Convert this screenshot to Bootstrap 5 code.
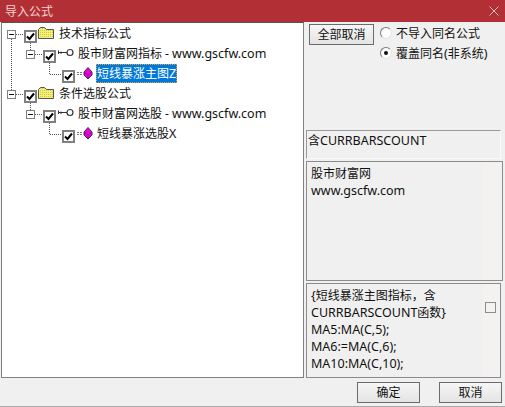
<!DOCTYPE html>
<html lang="zh"><head><meta charset="utf-8">
<link href="https://cdn.jsdelivr.net/npm/bootstrap@5.3.0/dist/css/bootstrap.min.css" rel="stylesheet">
<style>
html,body{margin:0;height:407px;width:505px;overflow:hidden;background:#f0f0f0}
body{font:12px/17px "Noto Sans","Noto Sans CJK SC",sans-serif;color:#111}
.lat{font-size:12.5px}
.dlg{width:505px;height:407px}
.ttl{height:22px;background:#b23035;color:#efd3d4;padding:0 6px 0 5px}
.mainrow{height:356px}
.treebox{width:303px;margin-left:1px;background:#fff;border:1px solid #808080;border-top-color:#555;padding-top:1px;position:relative}
.treelines{position:absolute;left:-2px;top:-23px}
.trow{height:20px;white-space:nowrap}
.lv0{padding-left:5px}
.lv1{padding-left:24px}
.lv2{padding-left:60px}
.expd{width:9px;height:9px;border:1px solid #808080;background:#fff;margin:6px 8px 0 0;flex:none;display:flex;align-items:center;justify-content:center}
.expd i{width:5px;height:1px;background:#111;display:block}
.cb{width:13px;height:13px;border:2px solid #808080;background:#fff;flex:none;margin-top:6px;display:flex;align-items:center;justify-content:center}
.ic{flex:none}
.fold{margin-left:1px}
.lab{padding:1px 1px 0;height:19px}
.sel{background:#0078d7;color:#fff;outline:1px dotted #e8a33c;outline-offset:-1px;margin-left:3px}
.plainleaf{margin-left:3px}
.side{width:200px;padding-left:2px}
.toprow{height:108px;padding:2px 0 0 3px}
.wbtn{border:1px solid #6b6b6b;background:linear-gradient(#f6f6f6,#e4e4e4);color:#111;font-size:12px;line-height:17px;padding:0;border-radius:0}
.allbtn{width:65px;height:21px}
.radrow{height:20px}
.radcol{margin:-1px 0 0 6px}
.radio{width:12px;height:12px;border-radius:50%;background:#fff;border:1px solid #e4e4e4;border-top-color:#777;border-left-color:#777;flex:none;display:flex;align-items:center;justify-content:center;margin-right:4px}
.radio i{width:4px;height:4px;border-radius:50%;background:#111;display:block}
.infobox{height:29px;width:195px;border:1px solid #fafafa;border-top-color:#999;border-left-color:#999;padding:1px 0 0 1px}
.panelbox{border:1px solid #8c8c8c;background:#f0f0f0}
.descbox{height:120px;width:197px;margin-top:2px;box-shadow:inset -1px 0 0 #fff}
.codebox{height:95px;width:195px;margin-top:2px}
.ptext{padding:3px 0 0 4px;flex:1 1 auto;white-space:nowrap}
.pstrip{width:19px;background:#f3f2f0;flex:none}
.codebox .pstrip{width:17px}
.cktiny{width:11px;height:11px;border:1px solid #8c8c8c;display:block;margin:18px 0 0 2px}
.foot{height:29px;padding:4px 3px 0 0;border-bottom:1px solid #aaa;gap:19px}
.footbtn{width:63px;height:21px}
</style></head><body>
<div class="dlg d-flex flex-column">
  <div class="ttl d-flex align-items-center justify-content-between"><span>导入公式</span>
    <svg width="10" height="10" viewBox="0 0 10 10"><path d="M0.500 0.500l9 9M9.500 0.500l-9 9" stroke="#e3bcbe" fill="none"/></svg></div>
  <div class="mainrow d-flex">
    <div class="treebox">
      <svg class="treelines" width="110" height="160"><g stroke="#555" stroke-dasharray="1 1" fill="none"><path d="M11.500 39V90M16 34.500H24M30.500 43V50M35 54.500H43M49.500 63V74.500H62M16 94.500H24M30.500 103V110M35 114.500H43M49.500 123V134.500H62"/></g></svg>

      <div class="trow lv0 d-flex"><span class="expd"><i></i></span><span class="cb"><svg width="9" height="9" viewBox="0 0 9 9"><path d="M1 4.500l2.500 2.500 4.500-5.500" stroke="#000" stroke-width="2" fill="none"/></svg></span>
        <svg class="ic fold" width="16" height="16" viewBox="0 0 16 16"><defs><pattern id="dith" width="2" height="2" patternUnits="userSpaceOnUse"><rect width="2" height="2" fill="#f6f06a"/><rect width="1" height="1" fill="#c8c46e"/></pattern></defs><path d="M.5 14.500V5.500l2-2h4l2 2h7v9z" fill="url(#dith)" stroke="#555"/></svg><span class="lab ms-1">技术指标公式</span></div>

      <div class="trow lv1 d-flex"><span class="expd"><i></i></span><span class="cb"><svg width="9" height="9" viewBox="0 0 9 9"><path d="M1 4.500l2.500 2.500 4.500-5.500" stroke="#000" stroke-width="2" fill="none"/></svg></span>
        <svg class="ic" width="18" height="18" viewBox="0 0 18 18"><path d="M2.500 6.500V10M5 7.500V10M2 8.500H11" stroke="#333" fill="none"/><circle cx="14" cy="8.500" r="3" fill="#fff" stroke="#333" stroke-width="1.200"/></svg><span class="lab ps-1">股市财富网指标 - <span class="lat">www.gscfw.com</span></span></div>

      <div class="trow lv2 d-flex"><span class="cb"><svg width="9" height="9" viewBox="0 0 9 9"><path d="M1 4.500l2.500 2.500 4.500-5.500" stroke="#000" stroke-width="2" fill="none"/></svg></span>
        <svg class="ic" width="18" height="18" viewBox="0 0 18 18"><path d="M2 8.500H8M2 10.500H8" stroke="#777" stroke-dasharray="2 1" fill="none"/><path d="M13 3.500L17 8v3l-4 4-4-4V8z" fill="#f000e0" stroke="#333"/><path d="M9 8l4 3 4-3M13 11v4" fill="none" stroke="#a000a0"/></svg><span class="lab sel">短线暴涨主图<span class="lat">Z</span></span></div>

      <div class="trow lv0 d-flex"><span class="expd"><i></i></span><span class="cb"><svg width="9" height="9" viewBox="0 0 9 9"><path d="M1 4.500l2.500 2.500 4.500-5.500" stroke="#000" stroke-width="2" fill="none"/></svg></span>
        <svg class="ic fold" width="16" height="16" viewBox="0 0 16 16"><path d="M.5 14.500V5.500l2-2h4l2 2h7v9z" fill="url(#dith)" stroke="#555"/></svg><span class="lab ms-1">条件选股公式</span></div>

      <div class="trow lv1 d-flex"><span class="expd"><i></i></span><span class="cb"><svg width="9" height="9" viewBox="0 0 9 9"><path d="M1 4.500l2.500 2.500 4.500-5.500" stroke="#000" stroke-width="2" fill="none"/></svg></span>
        <svg class="ic" width="18" height="18" viewBox="0 0 18 18"><path d="M2.500 6.500V10M5 7.500V10M2 8.500H11" stroke="#333" fill="none"/><circle cx="14" cy="8.500" r="3" fill="#fff" stroke="#333" stroke-width="1.200"/></svg><span class="lab ps-1">股市财富网选股 - <span class="lat">www.gscfw.com</span></span></div>

      <div class="trow lv2 d-flex"><span class="cb"><svg width="9" height="9" viewBox="0 0 9 9"><path d="M1 4.500l2.500 2.500 4.500-5.500" stroke="#000" stroke-width="2" fill="none"/></svg></span>
        <svg class="ic" width="18" height="18" viewBox="0 0 18 18"><path d="M2 8.500H8M2 10.500H8" stroke="#777" stroke-dasharray="2 1" fill="none"/><path d="M13 3.500L17 8v3l-4 4-4-4V8z" fill="#f000e0" stroke="#333"/><path d="M9 8l4 3 4-3M13 11v4" fill="none" stroke="#a000a0"/></svg><span class="lab plainleaf">短线暴涨选股<span class="lat">X</span></span></div>
    </div>
    <div class="side d-flex flex-column">
      <div class="toprow d-flex align-items-start">
        <button type="button" class="btn wbtn allbtn">全部取消</button>
        <div class="radcol">
          <div class="radrow d-flex align-items-center"><span class="radio"></span>不导入同名公式</div>
          <div class="radrow d-flex align-items-center"><span class="radio"><i></i></span>覆盖同名<span class="lat">(</span>非系统<span class="lat">)</span></div>
        </div>
      </div>
      <div class="infobox">含<span class="lat">CURRBARSCOUNT</span></div>
      <div class="panelbox descbox d-flex"><div class="ptext">股市财富网<br><span class="lat">www.gscfw.com</span></div><div class="pstrip"></div></div>
      <div class="panelbox codebox d-flex"><div class="ptext"><span class="lat">{</span>短线暴涨主图指标，含<br><span class="lat">CURRBARSCOUNT</span>函数<span class="lat">}</span><br><span class="lat">MA5:MA(C,5);<br>MA6:=MA(C,6);<br>MA10:MA(C,10);</span></div><div class="pstrip"><span class="cktiny"></span></div></div>
    </div>
  </div>
  <div class="foot d-flex justify-content-end">
    <button type="button" class="btn wbtn footbtn">确定</button>
    <button type="button" class="btn wbtn footbtn">取消</button>
  </div>
</div>
</body></html>
